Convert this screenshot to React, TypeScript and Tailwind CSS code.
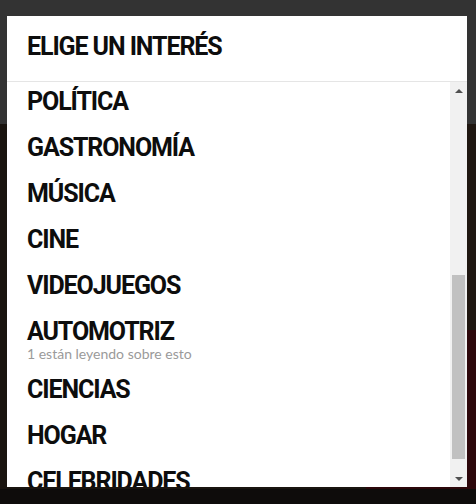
import React from "react";

const items: { name: string; sub?: string }[] = [
  { name: "POLÍTICA" },
  { name: "GASTRONOMÍA" },
  { name: "MÚSICA" },
  { name: "CINE" },
  { name: "VIDEOJUEGOS" },
  { name: "AUTOMOTRIZ", sub: "1 están leyendo sobre esto" },
  { name: "CIENCIAS" },
  { name: "HOGAR" },
  { name: "CELEBRIDADES" },
  { name: "TECNOLOGÍA" },
];

export default function App() {
  return (
    <div className="relative w-[476px] h-[504px] overflow-hidden bg-[#1c1611]">
      {/* page behind the overlay */}
      <div className="flex flex-col h-full">
        <div className="h-[124px] bg-[#333333]" />
        <div className="flex-1 flex">
          <div className="flex-1 bg-[#1a140f]" />
          <div className="w-[110px] flex flex-col">
            <div className="h-[206px] bg-[#1f1711]" />
            <div className="flex-1 bg-[#2c070b]" />
          </div>
        </div>
        <div className="h-[15px] bg-[#0e0c0b]" />
      </div>

      {/* modal */}
      <div className="absolute left-[7px] top-[16px] w-[460px] h-[471px] bg-white flex flex-col font-['Roboto',sans-serif]">
        <div className="h-[66px] shrink-0 border-b border-[#e5e5e5] pl-[20px] pt-[16px]">
          <div className="text-[25px] leading-[30px] font-bold tracking-[-1.1px] text-[#0d0d0d]">ELIGE UN INTERÉS</div>
        </div>
        <div className="flex-1 flex min-h-0">
          <div className="flex-1 overflow-hidden">
            <div className="-mt-[3px]">
              {items.map((it) => (
                <div key={it.name} className={it.sub ? "pl-[20px] pt-[8px] pb-[5px]" : "pl-[20px] py-[8px]"}>
                  <div className="text-[25px] leading-[30px] font-bold tracking-[-1.1px] text-[#0d0d0d]">{it.name}</div>
                  {it.sub && (
                    <div className="font-['Lato',sans-serif] text-[14px] leading-[16px] -mt-[1px] text-[#9a9a9a]">{it.sub}</div>
                  )}
                </div>
              ))}
            </div>
          </div>
          <div className="w-[17px] bg-[#f1f1f1] flex flex-col">
            <div className="h-[17px] flex items-center justify-center">
              <svg width="8" height="4" viewBox="0 0 8 4">
                <path d="M4 0 L8 4 L0 4 Z" fill="#505050" />
              </svg>
            </div>
            <div className="h-[176px]" />
            <div className="h-[184px] mx-[2px] bg-[#c1c1c1]" />
            <div className="flex-1" />
            <div className="h-[17px] flex items-center justify-center">
              <svg width="8" height="4" viewBox="0 0 8 4">
                <path d="M0 0 L8 0 L4 4 Z" fill="#505050" />
              </svg>
            </div>
          </div>
        </div>
      </div>
    </div>
  );
}
